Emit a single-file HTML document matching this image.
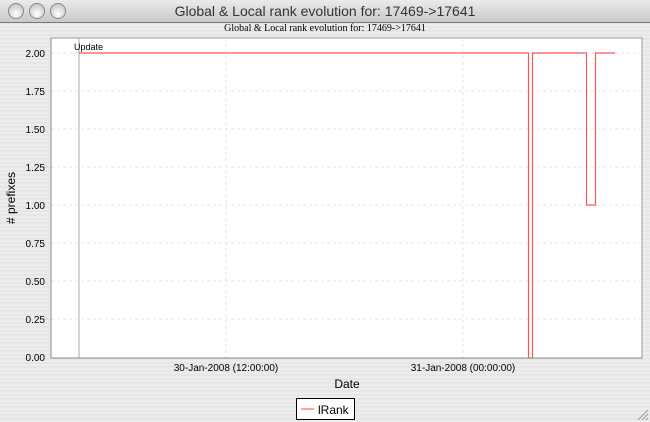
<!DOCTYPE html>
<html><head><style>
body{margin:0;width:650px;height:422px;overflow:hidden;background:repeating-linear-gradient(#ececec 0 2px,#e6e6e6 2px 4px);font-family:"Liberation Sans",sans-serif;position:relative}
.tb{position:absolute;left:0;top:0;width:650px;height:22px;background:linear-gradient(#ebebeb,#c9c9c9);border-bottom:1px solid #777;text-align:center;font-size:14px;color:#333;line-height:22px}
.b{position:absolute;top:3px;width:14px;height:14px;border-radius:50%;background:radial-gradient(circle at 50% 70%,#fff,#bbb);border:1px solid #888}
.t{position:absolute;font-size:11px;color:#000}
</style></head><body>
<div class="tb">Global &amp; Local rank evolution for: 17469-&gt;17641</div>
<div class="b" style="left:8px"></div><div class="b" style="left:29px"></div><div class="b" style="left:50px"></div>
<div class="t" style="left:0;width:650px;text-align:center;top:23px;font-family:'Liberation Serif',serif;font-size:10px">Global &amp; Local rank evolution for: 17469-&gt;17641</div>
<svg style="position:absolute;left:0;top:0" width="650" height="422">
<rect x="51" y="38" width="591" height="320" fill="#fff" stroke="#999"/>
<g stroke="#e6e6e6" stroke-dasharray="3,3">
<line x1="51" x2="642" y1="53" y2="53"/><line x1="51" x2="642" y1="91" y2="91"/><line x1="51" x2="642" y1="129" y2="129"/><line x1="51" x2="642" y1="167" y2="167"/><line x1="51" x2="642" y1="205" y2="205"/><line x1="51" x2="642" y1="243" y2="243"/><line x1="51" x2="642" y1="281" y2="281"/><line x1="51" x2="642" y1="319" y2="319"/>
<line x1="226" x2="226" y1="38" y2="358"/><line x1="463" x2="463" y1="38" y2="358"/></g>
<line x1="79" x2="79" y1="38" y2="358" stroke="#aaa"/>
<polyline fill="none" stroke="#f55" stroke-width="1.2" points="79,53 528.5,53 528.5,358 532.5,358 532.5,53 586.5,53 586.5,205 595.5,205 595.5,53 615,53"/>
<line x1="51" x2="51" y1="38" y2="358" stroke="#888"/><line x1="51" x2="642" y1="358" y2="358" stroke="#888"/>
<g font-size="10" text-anchor="end" font-family="Liberation Sans"><text x="45" y="57">2.00</text><text x="45" y="95">1.75</text><text x="45" y="133">1.50</text><text x="45" y="171">1.25</text><text x="45" y="209">1.00</text><text x="45" y="247">0.75</text><text x="45" y="285">0.50</text><text x="45" y="323">0.25</text><text x="45" y="361">0.00</text></g>
<g font-size="10" text-anchor="middle" font-family="Liberation Sans"><text x="226" y="371">30-Jan-2008 (12:00:00)</text><text x="463" y="371">31-Jan-2008 (00:00:00)</text></g>
<text x="347" y="388" font-size="12" text-anchor="middle" font-family="Liberation Sans">Date</text>
<text transform="translate(15,198) rotate(-90)" font-size="12" text-anchor="middle" font-family="Liberation Sans"># prefixes</text>
<text x="74" y="50" font-size="9" font-family="Liberation Sans">Update</text>
<rect x="296.5" y="398.5" width="58" height="21" fill="#fff" stroke="#000"/>
<line x1="301" x2="314" y1="409" y2="409" stroke="#f44"/>
<text x="318" y="414" font-size="12" font-family="Liberation Sans">lRank</text>
<g stroke="#999"><line x1="638" y1="420" x2="648" y2="410"/><line x1="642" y1="420" x2="648" y2="414"/><line x1="646" y1="420" x2="648" y2="418"/></g>
</svg>
</body></html>
